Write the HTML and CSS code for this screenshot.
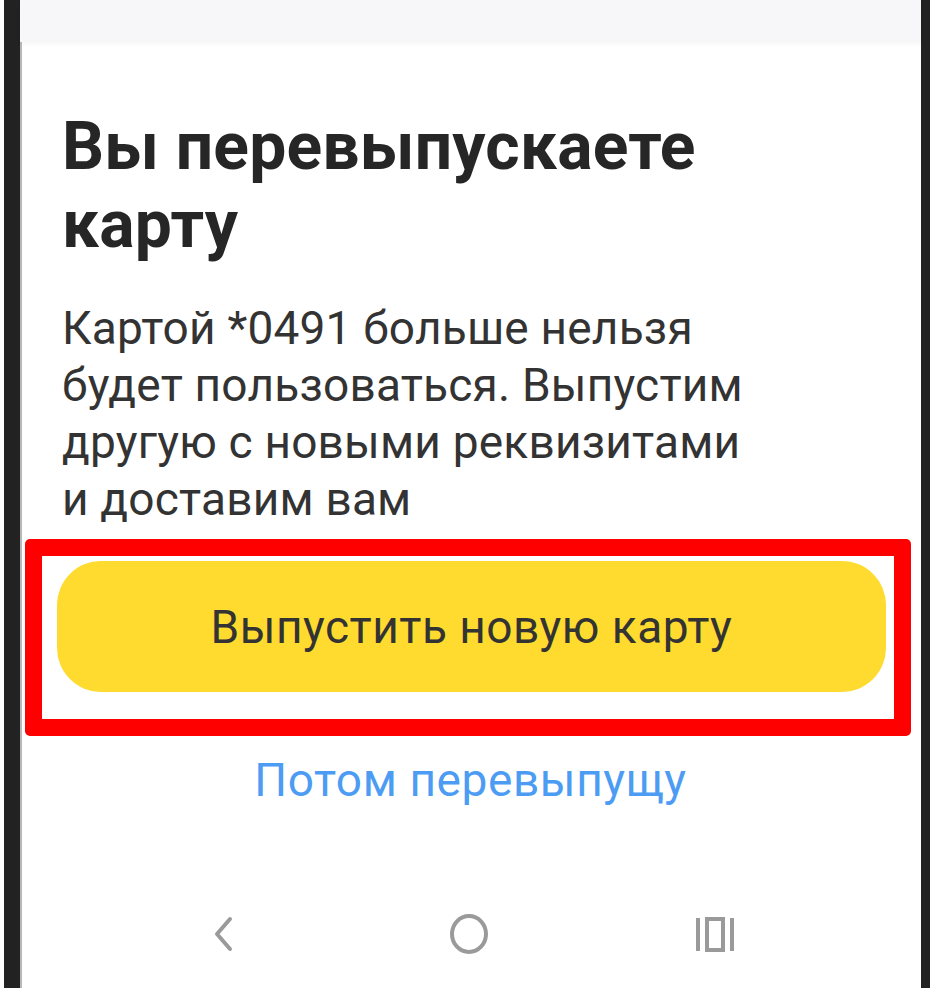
FILE: index.html
```html
<!DOCTYPE html>
<html lang="ru">
<head>
<meta charset="utf-8">
<title>Перевыпуск карты</title>
<link rel="stylesheet" href="styles.css">
</head>
<body>
<div class="phone">
  <div class="statusbar"></div>
  <main class="screen">
    <h1 class="title">Вы перевыпускаете карту</h1>
    <p class="text">Картой *0491 больше нельзя будет пользоваться. Выпустим другую с новыми реквизитами и доставим вам</p>
    <div class="highlight">
      <button class="primary">Выпустить новую карту</button>
    </div>
    <a class="later" href="#">Потом перевыпущу</a>
  </main>
  <nav class="navbar">
    <svg class="nav-icon" width="40" height="44" viewBox="0 0 40 44"><path d="M25 6 L12 21 L25 36" fill="none" stroke="#9a9a9a" stroke-width="4" stroke-linecap="round" stroke-linejoin="round"/></svg>
    <svg class="nav-icon" width="44" height="44" viewBox="0 0 44 44"><ellipse cx="22" cy="21" rx="17" ry="18" fill="none" stroke="#9a9a9a" stroke-width="4"/></svg>
    <svg class="nav-icon" width="44" height="44" viewBox="0 0 44 44"><g fill="none" stroke="#9a9a9a" stroke-width="4"><path d="M5 5 V38"/><path d="M39 5 V38"/><rect x="14" y="6" width="16" height="31"/></g></svg>
  </nav>
</div>
</body>
</html>
```
FILE: styles.css
```css
html, body {
  margin: 0;
  padding: 0;
  background: #ffffff;
}
body {
  font-family: Roboto, "Noto Sans", "DejaVu Sans", sans-serif;
  width: 941px;
  height: 1000px;
  overflow: hidden;
}
.phone {
  margin-left: 4px;
  width: 901px;
  height: 988px;
  border-left: 16px solid #222222;
  border-right: 9px solid #222222;
  background: #ffffff;
  display: flex;
  flex-direction: column;
  box-shadow: inset 2px 0 0 #b8b8b8;
}
.statusbar {
  height: 42px;
  background: #f7f7f9;
  box-shadow: 0 2px 4px rgba(0,0,0,0.04);
  flex: none;
}
.screen {
  flex: 1;
  display: flex;
  flex-direction: column;
}
.title {
  margin: 66px 0 0;
  padding: 0 0 0 42px;
  max-width: 760px;
  font-weight: 700;
  font-size: 66px;
  line-height: 78px;
  letter-spacing: 0.2px;
  color: #262626;
}
.text {
  margin: 36px 0 0;
  padding: 0 0 0 42px;
  max-width: 700px;
  font-size: 46px;
  line-height: 57px;
  letter-spacing: 0.2px;
  color: #333333;
}
.highlight {
  margin: 11px 10px 0 5px;
  border: 17px solid #ff0000;
  border-radius: 5px;
  padding: 5px 8px 27px 15px;
}
.primary {
  display: block;
  width: 100%;
  height: 131px;
  border: none;
  border-radius: 44px;
  background: #fedb2e;
  color: #333333;
  font-family: inherit;
  font-size: 46px;
  letter-spacing: 0.5px;
  padding: 0;
}
.later {
  align-self: center;
  margin-top: 14px;
  font-size: 46px;
  line-height: 60px;
  letter-spacing: 0.6px;
  color: #4c9cf3;
  text-decoration: none;
}
.navbar {
  height: 106px;
  display: flex;
  justify-content: center;
  align-items: center;
  gap: 202px;
  flex: none;
}
.nav-icon {
  display: block;
}
```
